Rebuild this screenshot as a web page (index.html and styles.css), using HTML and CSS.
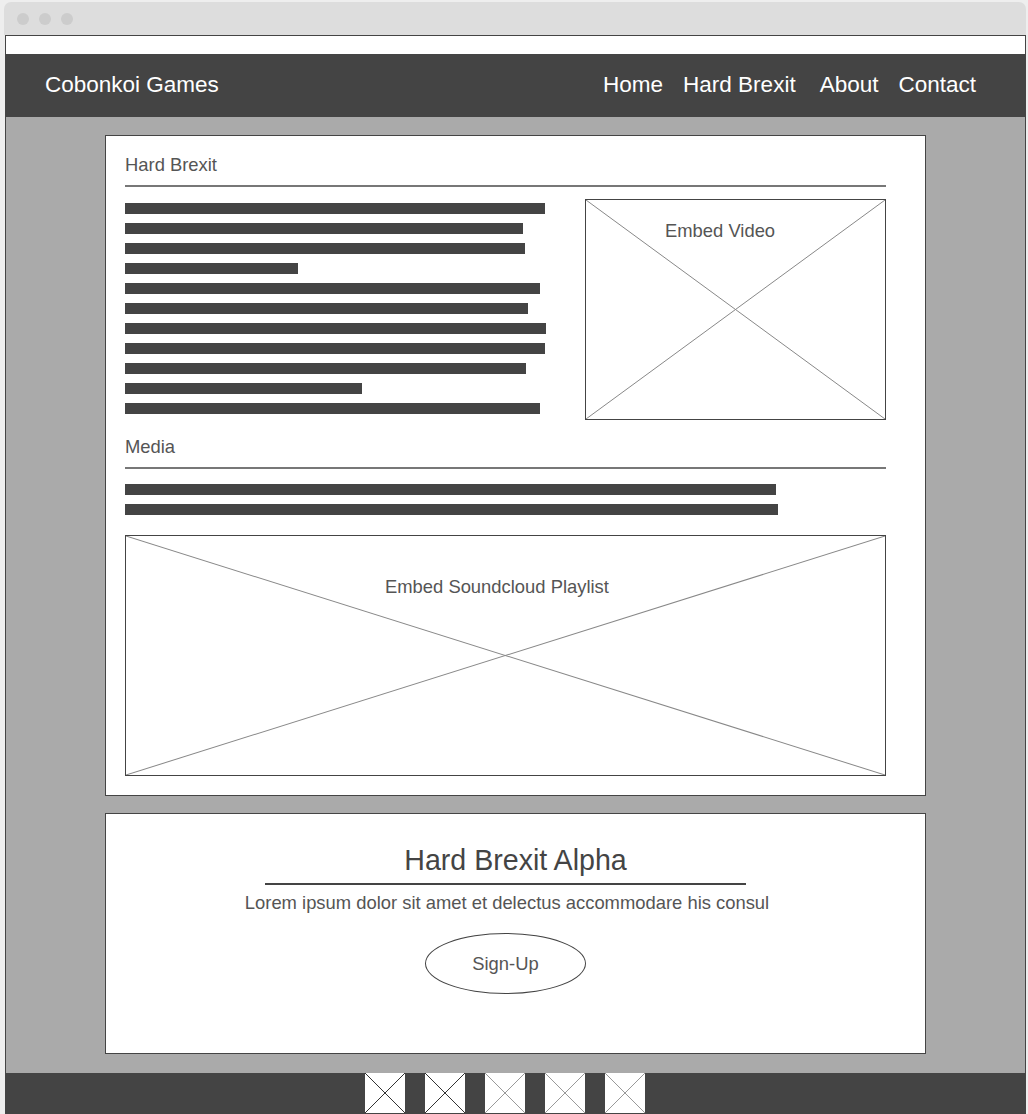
FILE: index.html
```html
<!DOCTYPE html>
<html lang="en">
<head>
  <meta charset="UTF-8" />
  <meta name="viewport" content="width=device-width, initial-scale=1" />
  <title>Cobonkoi Games - Hard Brexit</title>
  <link rel="stylesheet" href="styles.css">
</head>
<body>
  <div class="window">
    <div class="chrome" aria-hidden="true">
      <span class="dot"></span>
      <span class="dot"></span>
      <span class="dot"></span>
    </div>

    <div class="page">
      <div class="top-strip"></div>

      <header class="navbar">
        <div class="brand">Cobonkoi Games</div>
        <nav>
          <ul class="nav-links">
            <li>Home</li>
            <li>Hard Brexit</li>
            <li>About</li>
            <li>Contact</li>
          </ul>
        </nav>
      </header>

      <main class="content">
        <section class="card game">
          <h2 class="section-title">Hard Brexit</h2>

          <div class="intro">
            <div class="bars">
              <div class="bar" style="width:420px"></div>
              <div class="bar" style="width:398px"></div>
              <div class="bar" style="width:400px"></div>
              <div class="bar" style="width:173px"></div>
              <div class="bar" style="width:415px"></div>
              <div class="bar" style="width:403px"></div>
              <div class="bar" style="width:421px"></div>
              <div class="bar" style="width:420px"></div>
              <div class="bar" style="width:401px"></div>
              <div class="bar" style="width:237px"></div>
              <div class="bar" style="width:415px"></div>
            </div>

            <div class="embed embed-video">
              <svg viewBox="0 0 100 100" preserveAspectRatio="none" aria-hidden="true">
                <line x1="0" y1="0" x2="100" y2="100" vector-effect="non-scaling-stroke" />
                <line x1="100" y1="0" x2="0" y2="100" vector-effect="non-scaling-stroke" />
              </svg>
              <span class="embed-label">Embed Video</span>
            </div>
          </div>

          <h2 class="section-title media-title">Media</h2>

          <div class="bars media-bars">
            <div class="bar" style="width:651px"></div>
            <div class="bar" style="width:653px"></div>
          </div>

          <div class="embed embed-playlist">
            <svg viewBox="0 0 100 100" preserveAspectRatio="none" aria-hidden="true">
              <line x1="0" y1="0" x2="100" y2="100" vector-effect="non-scaling-stroke" />
              <line x1="100" y1="0" x2="0" y2="100" vector-effect="non-scaling-stroke" />
            </svg>
            <span class="embed-label">Embed Soundcloud Playlist</span>
          </div>
        </section>

        <section class="card promo">
          <h2 class="promo-title">Hard Brexit Alpha</h2>
          <div class="promo-body">
            <div class="promo-rule"></div>
            <p>Lorem ipsum dolor sit amet et delectus accommodare his consul</p>
            <button class="signup" type="button">Sign-Up</button>
          </div>
        </section>
      </main>

      <footer class="footer">
        <span class="social dark"><svg viewBox="0 0 40 40"><rect width="40" height="40" /><line x1="0" y1="0" x2="40" y2="40" /><line x1="40" y1="0" x2="0" y2="40" /></svg></span>
        <span class="social dark"><svg viewBox="0 0 40 40"><rect width="40" height="40" /><line x1="0" y1="0" x2="40" y2="40" /><line x1="40" y1="0" x2="0" y2="40" /></svg></span>
        <span class="social"><svg viewBox="0 0 40 40"><rect width="40" height="40" /><line x1="0" y1="0" x2="40" y2="40" /><line x1="40" y1="0" x2="0" y2="40" /></svg></span>
        <span class="social"><svg viewBox="0 0 40 40"><rect width="40" height="40" /><line x1="0" y1="0" x2="40" y2="40" /><line x1="40" y1="0" x2="0" y2="40" /></svg></span>
        <span class="social"><svg viewBox="0 0 40 40"><rect width="40" height="40" /><line x1="0" y1="0" x2="40" y2="40" /><line x1="40" y1="0" x2="0" y2="40" /></svg></span>
      </footer>
    </div>
  </div>
</body>
</html>
```

FILE: styles.css
```css
/* Reset and base */
* {
  box-sizing: border-box;
  margin: 0;
  padding: 0;
}
body {
  background: #eeeeee;
  font-family: 'Liberation Sans', Arial, sans-serif;
  color: #555;
  overflow: hidden;
}

/* Browser frame */
.window {
  width: 1022px;
  margin: 2px 0 0 4px;
}
.chrome {
  height: 33px;
  background: #dddddd;
  border-radius: 7px 7px 0 0;
  display: flex;
  align-items: center;
  gap: 10px;
  padding-left: 13px;
}
.dot {
  width: 12px;
  height: 12px;
  border-radius: 50%;
  background: #cccccc;
}
.page {
  width: 1021px;
  margin-left: 1px;
  border: 1px solid #444;
  border-bottom: none;
  background: #aaaaaa;
}
.top-strip {
  height: 18px;
  background: #fff;
}

/* Navbar */
.navbar {
  height: 63px;
  background: #444;
  display: flex;
  align-items: center;
  justify-content: space-between;
  padding: 0 49px 2px 39px;
  color: #fff;
  font-size: 22.5px;
}
.nav-links {
  display: flex;
  gap: 20px;
  list-style: none;
}
.nav-links li:nth-child(3) {
  margin-left: 4px;
}

/* Content */
.content {
  padding: 18px 0 19px;
  display: flex;
  flex-direction: column;
  align-items: center;
  gap: 17px;
}
.card {
  width: 821px;
  background: #fff;
  border: 1px solid #444;
}
.game {
  padding: 18px 39px 19px 19px;
}
.section-title {
  font-size: 18.4px;
  line-height: 22px;
  font-weight: normal;
  color: #555;
  padding-bottom: 9px;
  border-bottom: 2px solid #777;
}
.media-title {
  margin-top: 16px;
}
.intro {
  display: flex;
  justify-content: space-between;
  margin-top: 12px;
}
.bars {
  display: flex;
  flex-direction: column;
  gap: 9px;
  padding-top: 4px;
}
.media-bars {
  margin-top: 11px;
}
.bar {
  height: 11px;
  background: #444;
}

/* Placeholder embeds */
.embed {
  position: relative;
  border: 1px solid #444;
  background: #fff;
  font-size: 18.4px;
  line-height: 22px;
  color: #555;
}
.embed svg {
  position: absolute;
  top: 0;
  left: 0;
  width: 100%;
  height: 100%;
}
.embed line {
  stroke: #888;
  stroke-width: 1;
}
.embed-label {
  position: relative;
}
.embed-video {
  width: 301px;
  height: 221px;
  padding: 20px 0 0 79px;
}
.embed-playlist {
  height: 241px;
  margin-top: 20px;
  padding: 40px 0 0 259px;
}

/* Promo card */
.promo {
  height: 241px;
  padding-top: 29px;
}
.promo-title {
  text-align: center;
  font-size: 28.6px;
  line-height: 34px;
  font-weight: normal;
  color: #444;
}
.promo-body {
  padding-right: 20px;
  text-align: center;
}
.promo-rule {
  width: 481px;
  height: 2px;
  background: #444;
  margin: 6px auto 0;
}
.promo-body p {
  margin: 7px -3px 0 0;
  font-size: 18.4px;
  line-height: 22px;
}
.signup {
  display: block;
  width: 161px;
  height: 61px;
  margin: 19px auto 0;
  border: 1px solid #444;
  border-radius: 50%;
  background: #fff;
  font-family: inherit;
  font-size: 18.4px;
  color: #555;
  cursor: pointer;
}

/* Footer */
.footer {
  height: 60px;
  background: #444;
  display: flex;
  justify-content: center;
  gap: 20px;
  padding-right: 21px;
}
.social svg {
  display: block;
  width: 40px;
  height: 40px;
}
.social rect {
  fill: #fff;
}
.social line {
  stroke: #999;
  stroke-width: 1;
}
.social.dark line {
  stroke: #333;
}
```
